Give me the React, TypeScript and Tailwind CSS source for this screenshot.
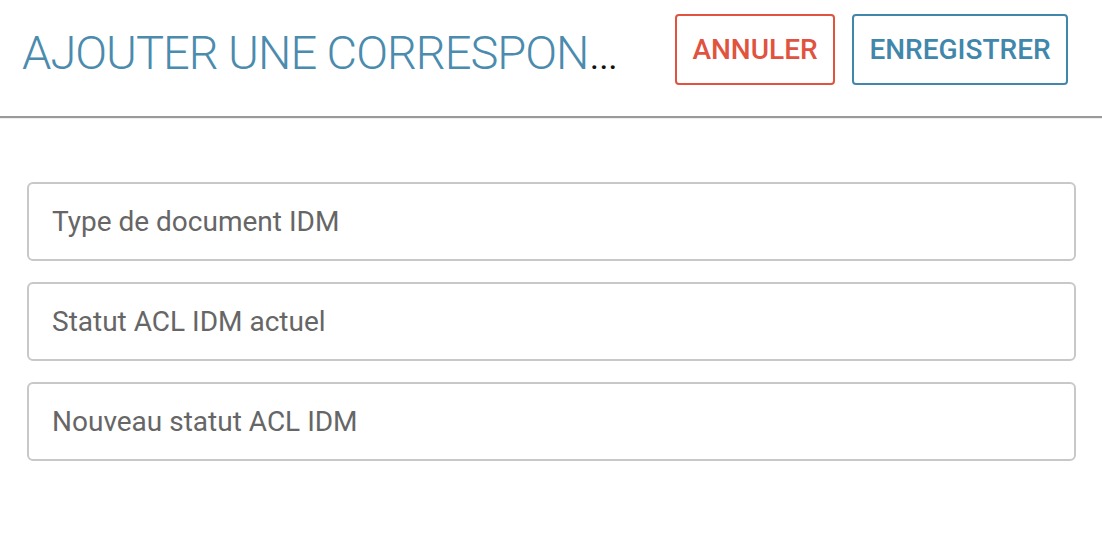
import React from "react";

const fields = ["Type de document IDM", "Statut ACL IDM actuel", "Nouveau statut ACL IDM"];

export default function App() {
  return (
    <div className="min-h-[536px] w-full bg-white font-['Roboto',sans-serif]">
      <header className="flex h-[118px] items-start justify-between border-b-2 border-[#9a9a9a] pl-[22px] pr-[34px] pt-[14px] shadow-[0_1px_0_#eeeeee]">
        <h1 className="mt-[13px] w-[604px] truncate text-[47px] font-light leading-[52px] tracking-[-1px] text-[#111]">
          <span className="text-[#4a8bae]">AJOUTER UNE CORRESPONDANCE</span>
        </h1>
        <div className="flex gap-[17px]">
          <button className="h-[71px] w-[160px] rounded-[4px] border-2 border-[#e0533f] text-[28px] font-medium text-[#e0533f]">
            ANNULER
          </button>
          <button className="h-[71px] w-[216px] rounded-[4px] border-2 border-[#4187ab] text-[28px] font-medium text-[#4187ab]">
            ENREGISTRER
          </button>
        </div>
      </header>
      <main className="flex flex-col gap-[21px] pl-[27px] pr-[26px] pt-[64px]">
        {fields.map((f) => (
          <input
            key={f}
            placeholder={f}
            className="h-[79px] w-full rounded-[6px] border-2 border-[#c8c8c8] px-[23px] text-[28px] text-[#555] outline-none placeholder:text-[#666]"
          />
        ))}
      </main>
    </div>
  );
}
